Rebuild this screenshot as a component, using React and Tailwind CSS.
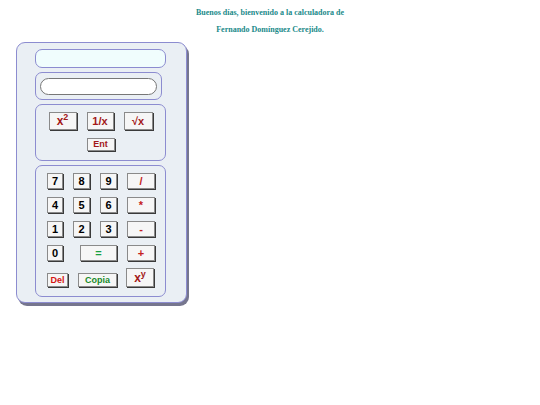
import React from "react";

const btn =
  "flex items-center justify-center border border-[#8a8a8a] bg-[#f6f6f6] shadow-[1px_1px_0_#3a3a3a] font-bold leading-none";

function Key({ children, className = "" }) {
  return <div className={`${btn} ${className}`}>{children}</div>;
}

export default function App() {
  return (
    <div className="relative h-[405px] w-[540px] bg-white font-['Liberation_Sans',Arial,sans-serif]">
      <div className="pt-[8px] text-center font-['Liberation_Serif','Times_New_Roman',serif] text-[8px] font-bold text-[#1a8a8a]">
        <p className="leading-[10px]">Buenos días, bienvenido a la calculadora de</p>
        <p className="mt-[7px] leading-[10px]">Fernando Domínguez Cerejido.</p>
      </div>

      <div className="ml-[16px] mt-[7px] flex h-[261px] w-[171px] flex-col gap-[4px] rounded-[9px] border border-[#8c8cd0] bg-[#eaeff4] pl-[18px] pr-[19px] pt-[6px] shadow-[2px_3px_0_#76768e]">
        <div className="h-[19px] w-[131px] rounded-[7px] border border-[#8c8cd0] bg-[#f0fdfd]" />

        <div className="flex h-[28px] w-[127px] items-center justify-center rounded-[7px] border border-[#8c8cd0] bg-[#eaeff4]">
          <div className="h-[17px] w-[117px] rounded-full border border-[#777] bg-white" />
        </div>

        <div className="flex h-[57px] w-[131px] flex-col items-center rounded-[7px] border border-[#8c8cd0] pt-[7px]">
          <div className="flex gap-[10px] text-[12px] text-[#a31818]">
            <Key className="h-[18px] w-[28px]">
              <span>
                x<span className="relative -top-[5px] text-[9px]">2</span>
              </span>
            </Key>
            <Key className="h-[18px] w-[27px] text-[11px]">1/x</Key>
            <Key className="h-[18px] w-[29px] text-[11px]">√x</Key>
          </div>
          <Key className="mt-[8px] h-[13px] w-[28px] text-[9px] text-[#a31818]">Ent</Key>
        </div>

        <div className="flex h-[132px] w-[131px] flex-col rounded-[7px] border border-[#8c8cd0] pl-[11px] pt-[7px] text-[11px]">
          {[
            ["7", "8", "9", "/"],
            ["4", "5", "6", "*"],
            ["1", "2", "3", "-"],
          ].map((row, i) => (
            <div key={i} className="mb-[8px] flex gap-[10px]">
              <Key className="h-[16px] w-[16px] text-black">{row[0]}</Key>
              <Key className="h-[16px] w-[17px] text-black">{row[1]}</Key>
              <Key className="h-[16px] w-[17px] text-black">{row[2]}</Key>
              <Key className="h-[16px] w-[28px] text-[#c42020]">{row[3]}</Key>
            </div>
          ))}
          <div className="flex">
            <Key className="h-[16px] w-[16px] text-black">0</Key>
            <Key className="ml-[17px] h-[16px] w-[37px] text-[#18a040]">=</Key>
            <Key className="ml-[10px] h-[16px] w-[28px] text-[#c42020]">+</Key>
          </div>
          <div className="mt-[7px] flex items-end">
            <Key className="h-[14px] w-[21px] text-[9px] text-[#d41414]">Del</Key>
            <Key className="ml-[10px] h-[14px] w-[39px] text-[9px] text-[#178a2a]">Copia</Key>
            <Key className="ml-[9px] h-[19px] w-[28px] text-[12px] text-[#a31818]">
              <span>
                x<span className="relative -top-[5px] text-[9px]">y</span>
              </span>
            </Key>
          </div>
        </div>
      </div>
    </div>
  );
}
